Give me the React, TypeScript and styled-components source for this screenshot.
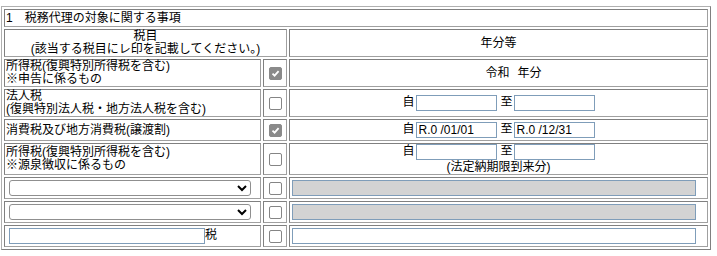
import styled, { createGlobalStyle } from "styled-components";

const GlobalStyle = createGlobalStyle`
  body {
    margin: 0;
    background: #fff;
    color: #000;
    font-family: "Liberation Sans", "Noto Sans CJK JP", sans-serif;
    font-size: 12px;
  }
`;

const Wrapper = styled.div`
  padding: 6px 0 0 1px;
`;

const Table = styled.table`
  width: 710px;
  table-layout: fixed;
  border-collapse: separate;
  border-spacing: 2px;
  border: 1px solid;
  border-color: #b0b0b0 #808080 #808080 #b0b0b0;
  font-size: 12px;
  line-height: 13px;
`;

const Row = styled.tr<{ $h: number }>`
  height: ${(p) => p.$h}px;
`;

const Cell = styled.td<{ $center?: boolean }>`
  border: 1px solid;
  border-color: #808080 #a0a0a0 #a0a0a0 #808080;
  padding: 0 1px;
  text-align: ${(p) => (p.$center ? "center" : "left")};
  vertical-align: middle;
  white-space: nowrap;
`;

const Title = styled(Cell)`
  padding: 2px 1px 1px;
`;

const Box = styled.span<{ $checked?: boolean }>`
  display: inline-flex;
  align-items: center;
  justify-content: center;
  box-sizing: border-box;
  width: 13px;
  height: 13px;
  border-radius: 2px;
  border: 1px solid ${(p) => (p.$checked ? "#8a8a8a" : "#858585")};
  background: ${(p) => (p.$checked ? "#8a8a8a" : "#fff")};
  vertical-align: middle;
`;

const DateInput = styled.input`
  box-sizing: border-box;
  width: 81px;
  height: 16px;
  margin: 0 0 0 1px;
  padding: 0 2px;
  border: 1px solid #7f9db9;
  font-family: inherit;
  font-size: 12px;
  line-height: 12px;
  vertical-align: middle;
  color: #000;
  background: #fff;
`;

const Gap = styled.span<{ $w: number }>`
  display: inline-block;
  width: ${(p) => p.$w}px;
`;

const WideInput = styled.input<{ $disabled?: boolean }>`
  box-sizing: border-box;
  width: 404px;
  height: 16px;
  margin: 0 0 0 1px;
  padding: 0 2px;
  border: 1px solid #7f9db9;
  background: ${(p) => (p.$disabled ? "#d3d3d3" : "#fff")};
  font-family: inherit;
  font-size: 12px;
  vertical-align: middle;
`;

const TaxInput = styled.input`
  box-sizing: border-box;
  width: 196px;
  height: 16px;
  margin: 0 0 0 3px;
  padding: 0 2px;
  border: 1px solid #7f9db9;
  font-family: inherit;
  font-size: 12px;
  vertical-align: middle;
`;

const Select = styled.select`
  box-sizing: border-box;
  width: 242px;
  height: 16px;
  margin: 0 0 0 3px;
  border: 1px solid #8f8f8f;
  border-radius: 3px;
  background: #fff;
  font-family: inherit;
  font-size: 12px;
  vertical-align: middle;
`;

const Note = styled.div`
  margin-top: 1px;
`;

function CheckBox({ checked }: { checked?: boolean }) {
  return (
    <Box $checked={checked}>
      {checked && (
        <svg width="9" height="9" viewBox="0 0 9 9">
          <path d="M1.5 4.6 L3.6 6.7 L7.6 2.2" fill="none" stroke="#fff" strokeWidth="1.8" />
        </svg>
      )}
    </Box>
  );
}

function Period({ from, to }: { from?: string; to?: string }) {
  return (
    <>
      自
      <DateInput defaultValue={from ?? ""} />
      <Gap $w={4} />至
      <DateInput defaultValue={to ?? ""} />
    </>
  );
}

function App() {
  return (
    <Wrapper>
      <GlobalStyle />
      <Table>
        <colgroup>
          <col style={{ width: 257 }} />
          <col style={{ width: 24 }} />
          <col style={{ width: 419 }} />
        </colgroup>
        <tbody>
          <Row $h={18}>
            <Title colSpan={3}>1　税務代理の対象に関する事項</Title>
          </Row>
          <Row $h={28}>
            <Cell colSpan={2} $center>
              税目
              <br />
              (該当する税目にレ印を記載してください。)
            </Cell>
            <Cell $center>年分等</Cell>
          </Row>
          <Row $h={28}>
            <Cell>
              所得税(復興特別所得税を含む)
              <br />
              ※申告に係るもの
            </Cell>
            <Cell $center>
              <CheckBox checked />
            </Cell>
            <Cell $center>
              <Gap $w={30} />令和<Gap $w={8} />年分
            </Cell>
          </Row>
          <Row $h={28}>
            <Cell>
              法人税
              <br />
              (復興特別法人税・地方法人税を含む)
            </Cell>
            <Cell $center>
              <CheckBox />
            </Cell>
            <Cell $center>
              <Period />
            </Cell>
          </Row>
          <Row $h={22}>
            <Cell>消費税及び地方消費税(譲渡割)</Cell>
            <Cell $center>
              <CheckBox checked />
            </Cell>
            <Cell $center>
              <Period from="R.0 /01/01" to="R.0 /12/31" />
            </Cell>
          </Row>
          <Row $h={32}>
            <Cell>
              所得税(復興特別所得税を含む)
              <br />
              ※源泉徴収に係るもの
            </Cell>
            <Cell $center>
              <CheckBox />
            </Cell>
            <Cell $center>
              <Period />
              <Note>(法定納期限到来分)</Note>
            </Cell>
          </Row>
          <Row $h={22}>
            <Cell>
              <Select>
                <option></option>
              </Select>
            </Cell>
            <Cell $center>
              <CheckBox />
            </Cell>
            <Cell>
              <WideInput $disabled disabled />
            </Cell>
          </Row>
          <Row $h={22}>
            <Cell>
              <Select>
                <option></option>
              </Select>
            </Cell>
            <Cell $center>
              <CheckBox />
            </Cell>
            <Cell>
              <WideInput $disabled disabled />
            </Cell>
          </Row>
          <Row $h={22}>
            <Cell>
              <TaxInput />税
            </Cell>
            <Cell $center>
              <CheckBox />
            </Cell>
            <Cell>
              <WideInput />
            </Cell>
          </Row>
        </tbody>
      </Table>
    </Wrapper>
  );
}

export default App;
